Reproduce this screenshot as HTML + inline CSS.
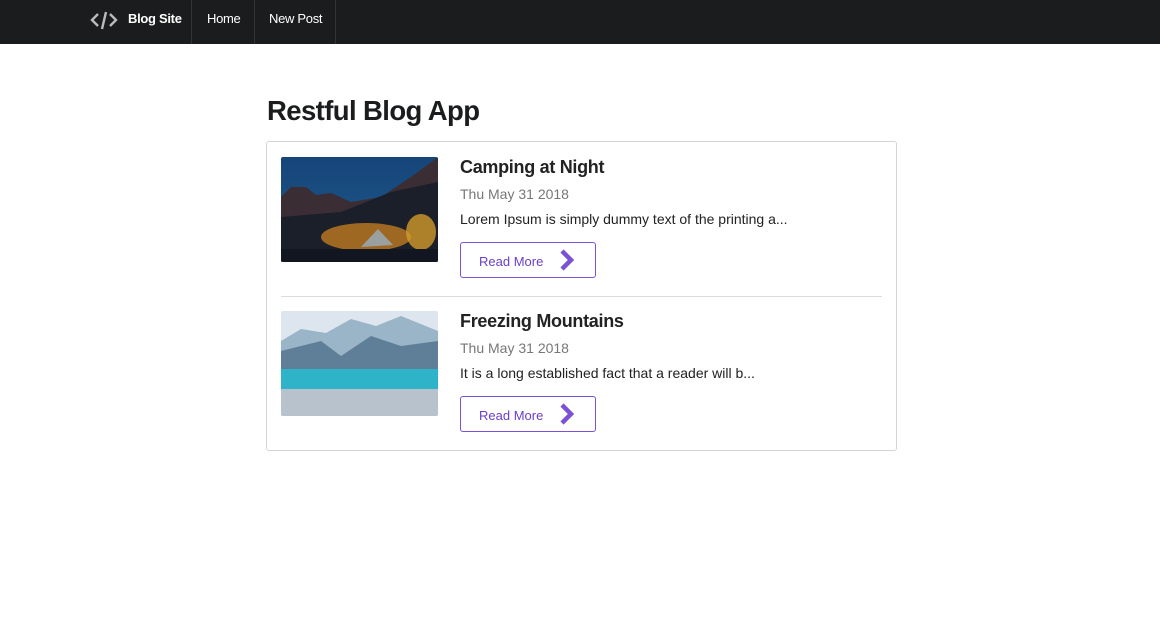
<!DOCTYPE html>
<html><head><meta charset="utf-8"><style>
*{box-sizing:border-box;margin:0;padding:0}
body{width:1160px;height:643px;background:#fff;font-family:"Liberation Sans",sans-serif;color:#222;overflow:hidden}
.nav{height:44px;background:#1b1c1d;position:relative}
.nav .logo{position:absolute;left:90px;top:9px}
.nav .brand{position:absolute;left:128px;top:11px;color:#fff;font-weight:bold;font-size:13px;letter-spacing:-0.3px}
.nav .sep{position:absolute;top:0;width:1px;height:44px;background:#333}
.nav .it{position:absolute;top:11px;color:#fff;font-size:13px;letter-spacing:-0.3px}
h1{position:absolute;left:267px;top:95px;font-size:27.5px;font-weight:bold;letter-spacing:-0.6px;color:#1b1c1d}
.box{position:absolute;left:266px;top:141px;width:631px;height:310px;border:1px solid #d4d4d5;border-radius:3px}
.post{position:absolute;left:14px;width:601px}
.img{position:absolute;left:0;top:0;width:157px;height:105px;border-radius:2px;overflow:hidden}
.t{position:absolute;left:179px;top:0;font-size:18px;font-weight:bold;color:#222;letter-spacing:-0.3px;white-space:nowrap}
.d{position:absolute;left:179px;top:29px;font-size:14px;color:#777;white-space:nowrap}
.x{position:absolute;left:179px;top:54px;font-size:14px;color:#222;white-space:nowrap}
.btn{position:absolute;left:179px;top:85px;width:136px;height:36px;border:1px solid #7b52d6;border-radius:3px;color:#6a3fc9;font-size:13px}
.btn span{position:absolute;left:18px;top:11px}
.btn svg{position:absolute;left:98px;top:5px}
.hr{position:absolute;left:14px;top:154px;width:601px;height:1px;background:#ddd}
</style></head><body>
<div class="nav">
<svg class="logo" width="28" height="22" viewBox="0 0 28 22"><path d="M8 5 L2 11 L8 17 M20 5 L26 11 L20 17 M16 3 L12 20" stroke="#bbb" stroke-width="2.4" fill="none"/></svg>
<div class="brand">Blog Site</div>
<div class="sep" style="left:191px"></div>
<div class="it" style="left:207px">Home</div>
<div class="sep" style="left:254px"></div>
<div class="it" style="left:269px">New Post</div>
<div class="sep" style="left:335px"></div>
</div>
<h1>Restful Blog App</h1>
<div class="box">
<div class="post" style="top:15px">
<div class="img"><svg width="157" height="105"><defs><linearGradient id="s1" x1="0" y1="0" x2="0" y2="1"><stop offset="0" stop-color="#16457a"/><stop offset="1" stop-color="#1f5a8a"/></linearGradient></defs><rect width="157" height="105" fill="url(#s1)"/><path d="M0 40 L10 30 L25 30 L35 38 L50 36 L70 45 L100 40 L130 20 L157 0 L157 105 L0 105Z" fill="#3a2d33"/><path d="M0 60 L60 55 L110 35 L157 25 L157 105 L0 105Z" fill="#1b1f2a"/><ellipse cx="85" cy="80" rx="45" ry="14" fill="#c07a20" opacity=".8"/><ellipse cx="140" cy="75" rx="15" ry="18" fill="#d19a2a" opacity=".8"/><path d="M80 90 L97 72 L112 88Z" fill="#9aa0a0"/><rect y="92" width="157" height="13" fill="#121620"/></svg></div>
<div class="t">Camping at Night</div>
<div class="d">Thu May 31 2018</div>
<div class="x">Lorem Ipsum is simply dummy text of the printing a...</div>
<div class="btn"><span>Read More</span><svg width="16" height="24" viewBox="0 0 16 24"><path d="M3 3 L12 12 L3 21" stroke="#7b52d6" stroke-width="4.5" fill="none"/></svg></div>
</div>
<div class="hr"></div>
<div class="post" style="top:169px">
<div class="img"><svg width="157" height="105"><rect width="157" height="105" fill="#dde6ee"/><path d="M0 30 L20 18 L45 22 L70 8 L95 15 L120 5 L157 20 L157 80 L0 80Z" fill="#9ab4c8"/><path d="M0 40 L40 30 L60 45 L90 25 L120 35 L157 30 L157 80 L0 80Z" fill="#5f7f98"/><rect y="58" width="157" height="22" fill="#2fb3c8"/><rect y="78" width="157" height="27" fill="#b8c2cc"/></svg></div>
<div class="t">Freezing Mountains</div>
<div class="d">Thu May 31 2018</div>
<div class="x">It is a long established fact that a reader will b...</div>
<div class="btn"><span>Read More</span><svg width="16" height="24" viewBox="0 0 16 24"><path d="M3 3 L12 12 L3 21" stroke="#7b52d6" stroke-width="4.5" fill="none"/></svg></div>
</div>
</div>
</body></html>
